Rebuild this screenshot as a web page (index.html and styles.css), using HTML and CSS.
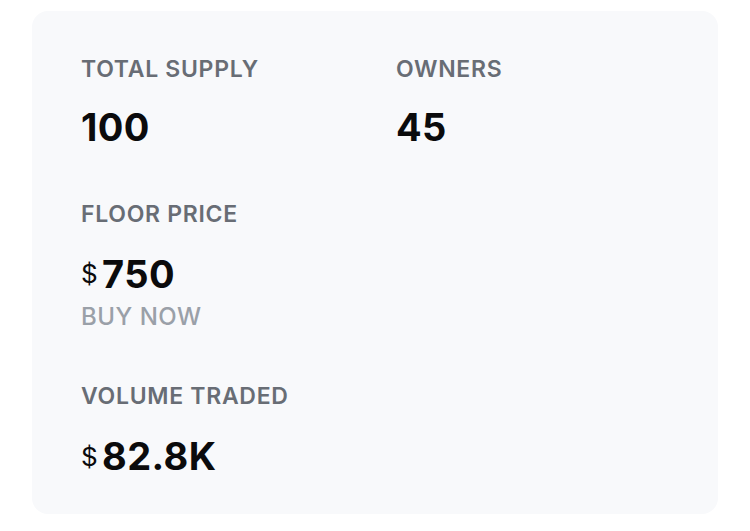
FILE: index.html
```html
<!DOCTYPE html>
<html>
<head>
<meta charset="utf-8">
<link rel="stylesheet" href="styles.css">
</head>
<body>
<div class="card">
  <div class="grid">
    <div class="stat">
      <div class="label">TOTAL SUPPLY</div>
      <div class="value">100</div>
    </div>
    <div class="stat">
      <div class="label">OWNERS</div>
      <div class="value">45</div>
    </div>
    <div class="stat">
      <div class="label">FLOOR PRICE</div>
      <div class="value"><span class="cur">$</span><span>750</span></div>
      <div class="sub">BUY NOW</div>
    </div>
    <div class="stat"></div>
    <div class="stat">
      <div class="label">VOLUME TRADED</div>
      <div class="value"><span class="cur">$</span><span>82.8K</span></div>
    </div>
  </div>
</div>
</body>
</html>
```
FILE: styles.css
```css
html, body {
  margin: 0;
  padding: 0;
  background: #ffffff;
}
body {
  font-family: Inter, "Noto Sans", sans-serif;
}
.card {
  box-sizing: border-box;
  margin: 11px 0 0 32px;
  width: 686px;
  height: 503px;
  background: #f8f9fb;
  border-radius: 16px;
  padding: 42px 49px 0 49px;
}
.grid {
  display: grid;
  grid-template-columns: 315px 1fr;
  row-gap: 47px;
}
.label {
  font-size: 23px;
  line-height: 32px;
  font-weight: 600;
  letter-spacing: 0.7px;
  color: #686d75;
}
.value {
  margin-top: 17.5px;
  display: flex;
  align-items: center;
  font-size: 38px;
  line-height: 48px;
  font-weight: 700;
  letter-spacing: 0.4px;
  color: #0b0b0c;
}
.cur {
  font-size: 26px;
  line-height: 53px;
  font-weight: 400;
  margin-right: 4px;
}
.sub {
  margin-top: 1px;
  font-size: 24px;
  line-height: 32px;
  font-weight: 500;
  letter-spacing: 0.5px;
  color: #9aa0a8;
}
```
